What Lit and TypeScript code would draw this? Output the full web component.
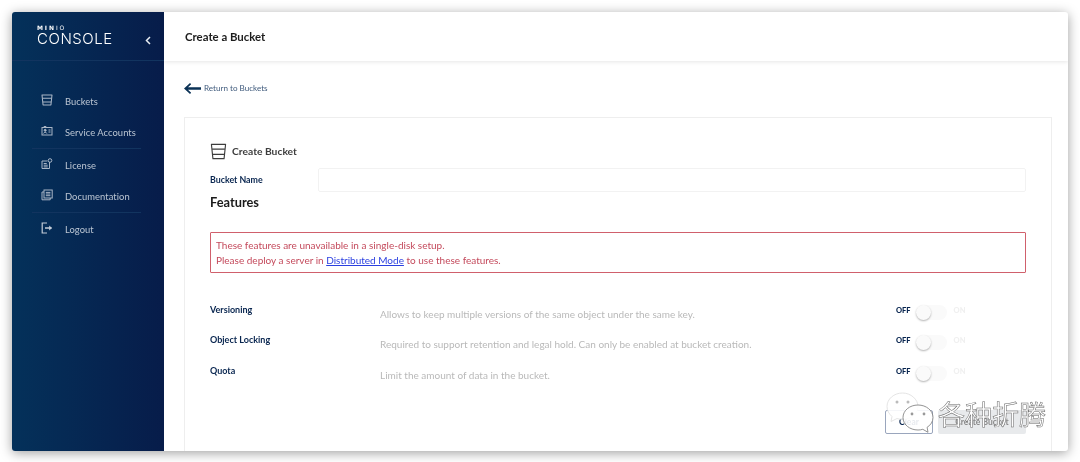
import { LitElement, html, css, svg } from "lit";
import { customElement } from "lit/decorators.js";

const bucket = (s: number, c: string, w: number) => html`<svg width=${s} height=${s} viewBox="0 0 18 18" fill="none" stroke=${c} stroke-width=${w} stroke-linejoin="round"><path d="M1.500 1.500h15l-1.600 15H3.100z"/><path d="M2.200 6.500h13.600M2.900 12h12.200"/></svg>`;

const icons: Record<string, unknown> = {
  bucket: bucket(12, "#aab6c6", 1.6),
  accounts: html`<svg width="12" height="12" viewBox="0 0 12 12" fill="none" stroke="#aab6c6" stroke-width="1"><rect x="1" y="2.500" width="10" height="7.500"/><path d="M3 2.500V1.500h2v1M7.500 5h2M7.500 7h2"/><circle cx="4.200" cy="5.300" r="1" fill="#aab6c6"/><path d="M2.600 8.500c.4-1.600 2.800-1.600 3.200 0" /></svg>`,
  license: html`<svg width="12" height="12" viewBox="0 0 12 12" fill="none" stroke="#aab6c6" stroke-width="1"><path d="M8.500 4v6.500H1V3h5.500"/><path d="M2.700 5.500h3M2.700 7.200h4M2.700 8.900h4"/><circle cx="9" cy="2.500" r="1.800"/></svg>`,
  docs: html`<svg width="12" height="12" viewBox="0 0 12 12" fill="none" stroke="#aab6c6" stroke-width="1"><rect x="3" y="1" width="8.200" height="8"/><path d="M3 3H1v7.800h8.200V9M4.800 3.400h4.600M4.800 5h4.600M4.800 6.700h4.600"/></svg>`,
  logout: html`<svg width="12" height="12" viewBox="0 0 12 12" fill="none" stroke="#c3ccd8" stroke-width="1.200"><path d="M6 1H1.200v10H6"/><path d="M4 6h6.500" stroke-width="1.400"/><path d="M8.200 3.600 11 6 8.200 8.400z" fill="#c3ccd8" stroke="none"/></svg>`,
};

const nav = [
  { icon: "bucket", label: "Buckets", divider: false },
  { icon: "accounts", label: "Service Accounts", divider: true },
  { icon: "license", label: "License", divider: false },
  { icon: "docs", label: "Documentation", divider: true },
  { icon: "logout", label: "Logout", divider: false },
];

const features = [
  { name: "Versioning", desc: "Allows to keep multiple versions of the same object under the same key." },
  { name: "Object Locking", desc: "Required to support retention and legal hold. Can only be enabled at bucket creation." },
  { name: "Quota", desc: "Limit the amount of data in the bucket." },
];

@customElement("app-root")
export class AppRoot extends LitElement {
  static styles = css`
    :host { display: block; width: 1080px; height: 462px; background: #fff; font-family: Lato, "Liberation Sans", sans-serif; overflow: hidden; position: relative; }
    * { box-sizing: border-box; }
    .stage { padding: 12px 12px 11px 12px; height: 462px; }
    .window { display: flex; height: 439px; border-radius: 3px; overflow: hidden; background: #fff; box-shadow: 0 2px 12px rgba(0,0,0,.38); filter: blur(.45px); }
    .side { width: 152px; flex: none; color: #bcc6d3; background: linear-gradient(90deg, #04315a 0%, #071c4a 100%); }
    .brand { height: 49px; border-bottom: 1px solid #12345f; padding: 13px 0 0 25px; position: relative; }
    .minio { font: 900 6px/5px "DejaVu Sans", sans-serif; letter-spacing: 1.9px; color: #fff; height: 7px; }
    .minio span { font-weight: 400; }
    .console { font: 300 15px/13px Inter, Lato, sans-serif; color: #fff; letter-spacing: .55px; }
    .chev { position: absolute; left: 133px; top: 24px; }
    .nav { padding-top: 24px; }
    .item { height: 32px; margin: 0 23px 0 20px; padding-left: 9px; display: flex; align-items: center; gap: 12px; font-size: 9.4px; letter-spacing: .05px; }
    .item.div { border-bottom: 1px solid #12345f; }
    .item svg { flex: none; margin-top: -3px; }
    .main { flex: 1; min-width: 0; }
    .top { height: 49px; display: flex; align-items: center; padding-left: 21px; font-size: 11.4px; font-weight: 700; color: #1d1d1d; box-shadow: 0 1px 4px rgba(0,0,0,.1); }
    .content { padding: 18px 16px 0 20px; }
    .back { display: flex; align-items: center; gap: 3px; height: 18px; font-size: 8.1px; color: #3f5a7c; }
    .card { margin-top: 20px; height: 340px; border: 1px solid #eeeeee; padding: 24px 25px 0 25px; }
    .head { display: flex; align-items: center; gap: 5px; height: 18px; font-size: 10.3px; font-weight: 700; color: #3d3d3d; }
    .name { display: flex; align-items: center; margin-top: 8px; height: 24px; }
    .label { width: 108px; flex: none; font-size: 8.8px; font-weight: 700; color: #08254f; margin-top: -2px; }
    .input { flex: 1; height: 24px; border: 1px solid #f2f2f2; border-radius: 2px; }
    h2 { margin: 1px 0 0; font-size: 12.8px; line-height: 18px; font-weight: 700; color: #1a1a1a; }
    .alert { margin-top: 21px; height: 41px; border: 1px solid #d0606c; border-radius: 1px; padding: 5px 5px; font-size: 10px; line-height: 15px; color: #c44a5c; }
    .alert a { color: #2a3fe0; text-decoration: underline; }
    .features { margin-top: 25px; }
    .row { display: grid; grid-template-columns: 170px 1fr auto; height: 30.4px; }
    .fname { font-size: 9px; font-weight: 700; color: #08254f; padding-top: 7px; line-height: 10px; }
    .fdesc { font-size: 10px; color: #b9b9b9; padding-top: 10px; line-height: 12px; }
    .sw { display: flex; align-items: flex-start; width: 130px; padding-top: 5px; font-size: 7.5px; font-weight: 900; color: #08254f; gap: 5px; line-height: 16px; }
    .track { width: 31px; height: 15px; margin-top: 2px; background: #fafafa; border-radius: 8px; position: relative; }
    .knob { position: absolute; left: 0; top: 0; width: 15px; height: 15px; border-radius: 50%; background: #fafafa; box-shadow: 0 1px 2px rgba(0,0,0,.3); }
    .on { color: #f0f0f0; margin-left: 2px; }
    .actions { display: flex; justify-content: flex-end; gap: 5px; margin-top: 21px; }
    .btn { height: 24px; display: flex; align-items: center; justify-content: center; font-size: 8.5px; font-weight: 700; border-radius: 2px; }
    .clear { width: 48px; border: 1px solid #9aa6bd; color: #08254f; }
    .create { width: 88px; background: #e8eaec; color: #8a8a8a; }
    .mark { position: absolute; left: 885px; top: 390px; display: flex; align-items: flex-start; filter: blur(.3px); }
    .mark-text { font: 400 27px/30px "Noto Sans CJK SC", sans-serif; color: #fff; -webkit-text-stroke: .5px #666; margin-left: 3px; margin-top: 9px; }
  `;

  render() {
    return html`
      <div class="stage">
        <div class="window">
          <aside class="side">
            <div class="brand">
              <div class="minio">MIN<span>IO</span></div>
              <div class="console">CONSOLE</div>
              <svg class="chev" width="6" height="9" viewBox="0 0 6 9" fill="none" stroke="#e8edf3" stroke-width="1.500"><path d="M5 1 1.500 4.500 5 8"/></svg>
            </div>
            <nav class="nav">
              ${nav.map((n) => html`<div class="item ${n.divider ? "div" : ""}">${icons[n.icon]}<span>${n.label}</span></div>`)}
            </nav>
          </aside>
          <main class="main">
            <div class="top">Create a Bucket</div>
            <div class="content">
              <div class="back">
                <svg width="17" height="11" viewBox="0 0 17 11" fill="#0b3256"><path d="M6 0 7.200 1.200 4 4.300h13v2.400H4l3.200 3.100L6 11 0 5.500z"/></svg>
                <span>Return to Buckets</span>
              </div>
              <section class="card">
                <div class="head">${bucket(17, "#3d3d3d", 1.200)}<span>Create Bucket</span></div>
                <div class="name"><span class="label">Bucket Name</span><div class="input"></div></div>
                <h2>Features</h2>
                <div class="alert">
                  These features are unavailable in a single-disk setup.<br />
                  Please deploy a server in <a href="#">Distributed Mode</a> to use these features.
                </div>
                <div class="features">
                  ${features.map((f) => html`
                    <div class="row">
                      <div class="fname">${f.name}</div>
                      <div class="fdesc">${f.desc}</div>
                      <div class="sw"><span>OFF</span><div class="track"><div class="knob"></div></div><span class="on">ON</span></div>
                    </div>`)}
                </div>
                <div class="actions">
                  <div class="btn clear">Clear</div>
                  <div class="btn create">Create Bucket</div>
                </div>
              </section>
            </div>
          </main>
        </div>
      </div>
      <div class="mark">
        <svg width="50" height="46" viewBox="0 0 50 46">
          ${svg`<path d="M17.500 3C9 3 2 9 2 16.500c0 4 2 7.500 5 10l-1 5 6-3c2 .6 3.500.9 5.500.9C26 29.400 33 23.500 33 16.500S26 3 17.500 3z" fill="#fff" fill-opacity=".9" stroke="#ddd" stroke-width=".8"/>
          <circle cx="12" cy="12" r="1.500" fill="#bbb"/><circle cx="23" cy="12" r="1.500" fill="#bbb"/>
          <path d="M33 15c-8.300 0-15 5.500-15 12.500S24.700 40 33 40c1.800 0 3.300-.2 4.800-.7l5.200 3-.9-5c3.700-2.300 5.900-5.700 5.900-9.800C48 20.500 41.300 15 33 15z" fill="#fff" fill-opacity=".9" stroke="#777" stroke-width=".8"/>
          <circle cx="27" cy="24" r="1.400" fill="#999"/><circle cx="39" cy="24" r="1.400" fill="#999"/>`}
        </svg>
        <span class="mark-text">各种折腾</span>
      </div>
    `;
  }
}
